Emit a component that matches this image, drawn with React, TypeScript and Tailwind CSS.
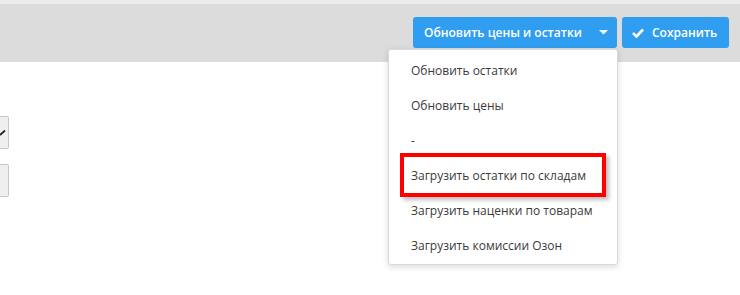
import React from "react";

const items = [
  "Обновить остатки",
  "Обновить цены",
  "-",
  "Загрузить остатки по складам",
  "Загрузить наценки по товарам",
  "Загрузить комиссии Озон",
];

export default function App() {
  return (
    <div
      className="relative w-[740px] h-[295px] bg-white overflow-hidden"
      style={{ fontFamily: '"Open Sans", "Noto Sans", sans-serif' }}
    >
      <div className="h-[62px] bg-[#dcdcdd] border-t-[4px] border-[#ececec] flex justify-end items-start pt-[13px] pr-[11px] gap-[5px]">
        <button className="h-[31px] w-[204px] bg-[#2f9df0] rounded-[3px] text-white text-[12px] font-semibold flex items-center pl-[11px] pr-[8px]">
          <span className="flex-1 text-left">Обновить цены и остатки</span>
          <svg width="9" height="5" viewBox="0 0 9 5" className="mr-[1px]">
            <path d="M0 0 L9 0 L4.5 4.5 Z" fill="white" />
          </svg>
        </button>
        <button className="h-[31px] w-[107px] bg-[#2f9df0] rounded-[3px] text-white text-[12px] font-semibold flex items-center pl-[10px] gap-[8px]">
          <svg width="12" height="10" viewBox="0 0 12 10">
            <path d="M1 5 L4.5 8.5 L11 1.5" stroke="white" strokeWidth="2.6" fill="none" />
          </svg>
          <span>Сохранить</span>
        </button>
      </div>

      <div className="flex flex-col gap-[15px] mt-[54px]">
        <div className="w-[9px] h-[33px] bg-[#efefef] border border-l-0 border-[#c8c8c8] rounded-r-[2px] flex items-center justify-end pr-[2px]">
          <svg width="6" height="6" viewBox="0 0 6 6">
            <path d="M0 5 L5 0.5" stroke="#222" strokeWidth="1.8" />
          </svg>
        </div>
        <div className="w-[9px] h-[33px] bg-[#efefef] border border-l-0 border-[#c8c8c8] rounded-r-[2px]" />
      </div>

      <div className="absolute left-[388px] top-[49px] w-[230px] h-[216px] bg-white border border-[#d9d9d9] rounded-[3px] shadow-[0_2px_6px_rgba(0,0,0,0.15)] pt-[3px]">
        {items.map((t) => (
          <div key={t} className="h-[35px] flex items-center pl-[22px] text-[12px] text-[#3a3a3a]">
            {t}
          </div>
        ))}
      </div>

      <div className="absolute left-[400px] top-[153px] w-[206px] h-[44px] border-[4px] border-[#ff0000] shadow-[3px_3px_4px_rgba(0,0,0,0.25)]" />
    </div>
  );
}
